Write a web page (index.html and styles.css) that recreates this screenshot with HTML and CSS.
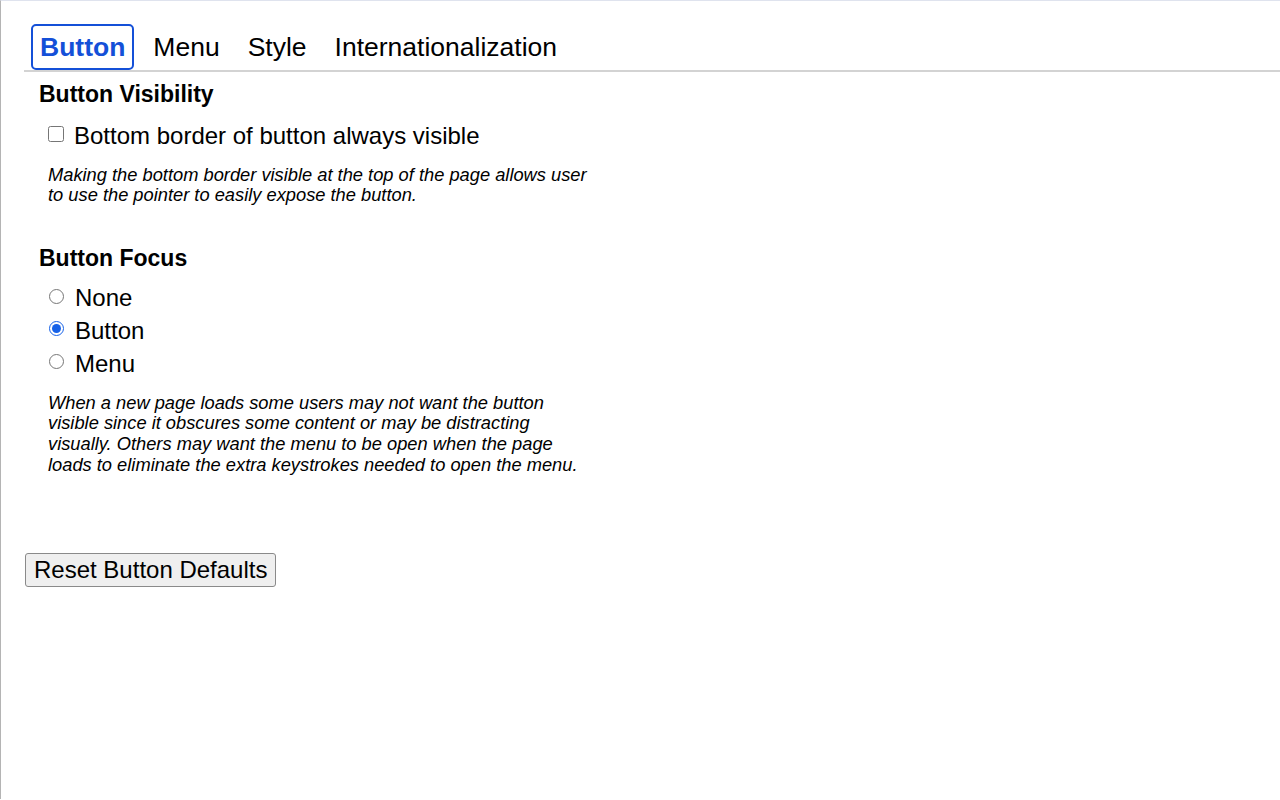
FILE: index.html
```html
<!DOCTYPE html>
<html lang="en">
<head>
<meta charset="utf-8">
<title>Options</title>
<link rel="stylesheet" href="styles.css">
</head>
<body>
<div class="page">
  <ul class="tabs">
    <li class="tab active">Button</li>
    <li class="tab">Menu</li>
    <li class="tab">Style</li>
    <li class="tab">Internationalization</li>
  </ul>
  <div class="panel">
    <h2 class="heading first">Button Visibility</h2>
    <label class="check-row"><input type="checkbox" class="check"><span>Bottom border of button always visible</span></label>
    <p class="desc first-desc">Making the bottom border visible at the top of the page allows user<br>to use the pointer to easily expose the button.</p>

    <h2 class="heading second">Button Focus</h2>
    <div class="radios">
      <label class="radio-row"><input type="radio" name="focus" class="radio"><span>None</span></label>
      <label class="radio-row"><input type="radio" name="focus" class="radio" checked><span>Button</span></label>
      <label class="radio-row"><input type="radio" name="focus" class="radio"><span>Menu</span></label>
    </div>
    <p class="desc second-desc">When a new page loads some users may not want the button<br>visible since it obscures some content or may be distracting<br>visually. Others may want the menu to be open when the page<br>loads to eliminate the extra keystrokes needed to open the menu.</p>
  </div>
  <button class="reset" type="button">Reset Button Defaults</button>
</div>
</body>
</html>
```
FILE: styles.css
```css
html, body {
  margin: 0;
  padding: 0;
  background: #ffffff;
}
body {
  font-family: "Liberation Sans", Arial, Helvetica, sans-serif;
  color: #000;
  border-left: 1px solid #b4b4b4;
  border-top: 1px solid #dfe3ee;
  min-height: 799px;
  box-sizing: border-box;
}
.page {
  padding-left: 23px;
}
.tabs {
  list-style: none;
  margin: 23px 0 0 0;
  padding: 0 0 0 7px;
  display: flex;
  gap: 10px;
  border-bottom: 2px solid #d3d3d3;
}
.tab {
  font-size: 26.5px;
  line-height: 30px;
  padding: 6px 7px;
  border: 2px solid transparent;
  border-radius: 5px;
  color: #000;
}
.tab.active {
  color: #1450d8;
  border-color: #1450d8;
  font-weight: bold;
}
.panel {
  padding-left: 15px;
}
.heading {
  font-size: 23px;
  line-height: 26px;
  font-weight: bold;
  margin: 0;
}
.heading.first {
  margin-top: 9px;
}
.heading.second {
  margin-top: 39px;
}
.check-row {
  display: flex;
  align-items: center;
  margin-top: 15px;
  padding-left: 9px;
  font-size: 24px;
  line-height: 28px;
}
.check {
  width: 16px;
  height: 16px;
  margin: -5px 10px 0 0;
  accent-color: #1762e8;
}
.desc {
  margin: 0;
  padding-left: 9px;
  font-size: 18.3px;
  line-height: 20.7px;
  font-style: italic;
}
.first-desc {
  margin-top: 14.5px;
}
.radios {
  margin-top: 11.5px;
  display: flex;
  flex-direction: column;
}
.radio-row {
  display: flex;
  align-items: center;
  padding-left: 10px;
  font-size: 24px;
  line-height: 32.6px;
}
.radio {
  width: 15px;
  height: 15px;
  margin: -5px 11px 0 0;
  accent-color: #1762e8;
}
.second-desc {
  margin-top: 12.5px;
}
.reset {
  display: block;
  margin: 77.6px 0 0 1px;
  font-family: "Liberation Sans", Arial, Helvetica, sans-serif;
  font-size: 24px;
  line-height: 28px;
  padding: 2px 8px;
  border: 1px solid #8a8a8a;
  border-radius: 3px;
  background: #efefef;
  color: #000;
}
```
